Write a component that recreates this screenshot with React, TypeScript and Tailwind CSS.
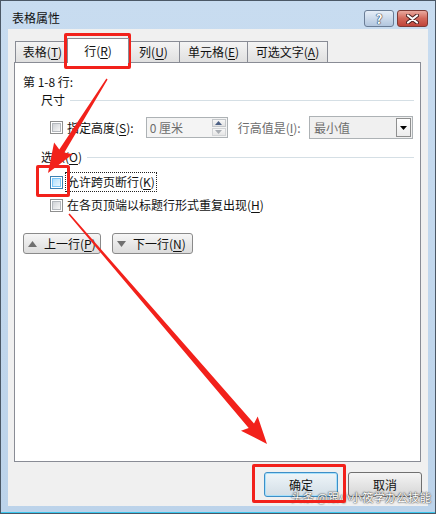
import React from "react";

type Pt = [number, number];

// tapered annotation arrow, computed as a polygon
function arrowPoints(t: Pt, h: Pt, headLen: number, headW: number, tailW: number, neckW: number) {
  const dx = h[0] - t[0];
  const dy = h[1] - t[1];
  const L = Math.hypot(dx, dy);
  const ux = dx / L, uy = dy / L, px = -uy, py = ux;
  const bx = h[0] - ux * headLen, by = h[1] - uy * headLen;
  const pts: Pt[] = [
    [t[0] + (px * tailW) / 2, t[1] + (py * tailW) / 2],
    [bx + (px * neckW) / 2, by + (py * neckW) / 2],
    [bx + (px * headW) / 2 - ux * 3, by + (py * headW) / 2 - uy * 3],
    h,
    [bx - (px * headW) / 2 - ux * 3, by - (py * headW) / 2 - uy * 3],
    [bx - (px * neckW) / 2, by - (py * neckW) / 2],
    [t[0] - (px * tailW) / 2, t[1] - (py * tailW) / 2],
  ];
  return pts.map((p) => p.map((n) => n.toFixed(1)).join(",")).join(" ");
}

function Mn({ c }: { c: string }) {
  return <span className="underline decoration-1 underline-offset-[2px]">{c}</span>;
}

function Check({ hot = false }: { hot?: boolean }) {
  return (
    <span
      className={`flex h-[13px] w-[13px] shrink-0 items-center justify-center border bg-white ${
        hot ? "border-[#3c7fb1]" : "border-[#8e8f8f]"
      }`}
    >
      <span
        className={`h-[9px] w-[9px] border ${
          hot
            ? "border-[#79c6f9] bg-linear-to-br from-[#b1dffd] to-[#e9f7fe]"
            : "border-[#b4b8bd] bg-linear-to-br from-[#cfd2d6] to-[#f7f7f7]"
        }`}
      />
    </span>
  );
}

function Tab({ children, w, active = false, last = false }: { children: React.ReactNode; w: string; active?: boolean; last?: boolean }) {
  if (active) {
    return (
      <div
        className={`relative z-10 -mx-[2px] -mb-px flex h-[25px] items-center justify-center border-x border-t border-[#898c95] bg-white ${w}`}
      >
        {children}
      </div>
    );
  }
  return (
    <div
      className={`flex h-[21px] items-center justify-center border-l border-t border-[#898c95] bg-linear-to-b from-[#f4f4f4] to-[#e0e0e0] ${
        last ? "border-r" : ""
      } ${w}`}
    >
      {children}
    </div>
  );
}

function Section({ children }: { children: React.ReactNode }) {
  return (
    <div className="flex h-[16px] items-center pl-[18px]">
      <span>{children}</span>
      <span className="ml-[5px] h-px flex-1 bg-[#d5dfe5]" />
    </div>
  );
}

function NavButton({ up, children }: { up: boolean; children: React.ReactNode }) {
  return (
    <div className="flex h-[21px] items-center gap-[7px] rounded-[3px] border border-[#8a8a8a] bg-linear-to-b from-[#f6f6f6] to-[#dcdcdc] pl-[4px]">
      <svg width="9" height="6" viewBox="0 0 9 6">
        {up ? <polygon points="0,6 9,6 4.5,0" fill="#707070" /> : <polygon points="0,0 9,0 4.5,6" fill="#707070" />}
      </svg>
      <span>{children}</span>
    </div>
  );
}

export default function App() {
  return (
    <div className="relative h-[514px] w-[437px] bg-white font-['Noto_Sans_CJK_SC',sans-serif] text-[12px] leading-[16px] text-[#111]">
      {/* window frame */}
      <div className="flex h-[514px] w-[436px] flex-col border border-[#4b5866] bg-linear-to-b from-[#c8dcf0] to-[#bcd3ea]">
        {/* title bar */}
        <div className="flex h-[28px] items-start justify-between pr-[7px]">
          <span className="pl-[11px] pt-[9px]">表格属性</span>
          <div className="flex gap-[3px] pt-[9px]">
            <div className="flex h-[17px] w-[30px] items-center justify-center rounded-[3px] border border-[#6a7d96] bg-linear-to-b from-[#e6eef8] to-[#b2c6de]">
              <span className="text-[13px] font-bold leading-[13px] text-white [text-shadow:0_0_1px_#23344b,0_0_1px_#23344b,0_0_1px_#23344b]">
                ?
              </span>
            </div>
            <div className="flex h-[17px] w-[31px] items-center justify-center rounded-[3px] border border-[#7d3a35] bg-linear-to-b from-[#e9a99f] via-[#d2675a] to-[#c0443a]">
              <svg width="13" height="10" viewBox="0 0 13 10">
                <path d="M2 1.5 L11 8.5 M11 1.5 L2 8.5" stroke="#4a2020" strokeWidth="4" strokeLinecap="round" />
                <path d="M2 1.5 L11 8.5 M11 1.5 L2 8.5" stroke="#ffffff" strokeWidth="2.2" strokeLinecap="round" />
              </svg>
            </div>
          </div>
        </div>

        {/* client area */}
        <div className="mx-[7px] h-[477px] bg-[#f0f0f0] pl-[6px] pr-[7px] pt-[9px]">
          <div className="flex h-[24px] items-end pl-[1px]">
            <Tab w="w-[54px]">
              <span>
                表格(<Mn c="T" />)
              </span>
            </Tab>
            <Tab w="w-[62px]" active>
              <span>
                行(<Mn c="R" />)
              </span>
            </Tab>
            <Tab w="w-[52px]">
              <span>
                列(<Mn c="U" />)
              </span>
            </Tab>
            <Tab w="w-[68px]">
              <span>
                单元格(<Mn c="E" />)
              </span>
            </Tab>
            <Tab w="w-[81px]" last>
              <span>
                可选文字(<Mn c="A" />)
              </span>
            </Tab>
          </div>

          <div className="h-[400px] w-[407px] border border-[#898c95] bg-white pl-[8px] pr-[6px] pt-[11px]">
            <div>第 1-8 行:</div>

            <div className="mt-[2px]">
              <Section>尺寸</Section>
            </div>

            <div className="mt-[8px] flex h-[23px] items-center pl-[27px]">
              <Check />
              <span className="ml-[4px]">
                指定高度(<Mn c="S" />):
              </span>
              <div className="ml-[12px] flex h-[21px] w-[82px] border border-[#adb2b5] bg-[#f4f4f4]">
                <span className="flex-1 pl-[3px] leading-[19px] text-[#6d6d6d]">0 厘米</span>
                <div className="flex w-[16px] flex-col gap-px p-px">
                  <span className="flex flex-1 items-center justify-center border border-[#c4c7ca] bg-linear-to-b from-[#f7f7f7] to-[#e2e2e2]">
                    <svg width="7" height="4" viewBox="0 0 7 4">
                      <polygon points="0,4 7,4 3.5,0" fill="#4d6185" />
                    </svg>
                  </span>
                  <span className="flex flex-1 items-center justify-center border border-[#d2d4d6] bg-linear-to-b from-[#f7f7f7] to-[#e6e6e6]">
                    <svg width="7" height="4" viewBox="0 0 7 4">
                      <polygon points="0,0 7,0 3.5,4" fill="#a9adb3" />
                    </svg>
                  </span>
                </div>
              </div>
              <span className="ml-[10px] text-[#6d6d6d]">
                行高值是(<Mn c="I" />):
              </span>
              <div className="ml-auto mr-px flex h-[23px] w-[104px] border border-[#adb2b5] bg-[#f0f0f0]">
                <span className="flex-1 pl-[4px] leading-[21px] text-[#6d6d6d]">最小值</span>
                <span className="m-px flex w-[15px] items-center justify-center border border-[#8e8f8f] bg-linear-to-b from-[#ffffff] to-[#ececec]">
                  <svg width="7" height="4" viewBox="0 0 7 4">
                    <polygon points="0,0 7,0 3.5,4" fill="#000" />
                  </svg>
                </span>
              </div>
            </div>

            <div className="mt-[10px]">
              <Section>
                选项(<Mn c="O" />)
              </Section>
            </div>

            <div className="mt-[7px] flex h-[20px] items-center pl-[27px]">
              <Check hot />
              <span className="ml-[2px] flex h-[20px] items-center border border-dotted border-[#222] px-px">
                允许跨页断行(<Mn c="K" />)
              </span>
            </div>
            <div className="mt-[3px] flex h-[20px] items-center pl-[27px]">
              <Check />
              <span className="ml-[4px]">
                在各页顶端以标题行形式重复出现(<Mn c="H" />)
              </span>
            </div>

            <div className="mt-[18px] flex gap-[11px]">
              <div className="w-[78px]">
                <NavButton up>
                  上一行(<Mn c="P" />)
                </NavButton>
              </div>
              <div className="w-[81px]">
                <NavButton up={false}>
                  下一行(<Mn c="N" />)
                </NavButton>
              </div>
            </div>
          </div>

          <div className="-mr-px mt-[10px] flex justify-end gap-[10px]">
            <div className="flex h-[25px] w-[74px] items-center justify-center rounded-[3px] border border-[#3c8fc8] bg-linear-to-b from-[#eef5f9] to-[#d3dee6] shadow-[inset_0_0_0_1px_#a8e0fa]">
              确定
            </div>
            <div className="flex h-[25px] w-[74px] items-center justify-center rounded-[3px] border border-[#707070] bg-linear-to-b from-[#f4f4f4] to-[#d6d6d6]">
              取消
            </div>
          </div>
        </div>

        <div className="mt-[6px] h-px bg-[#3bc7ee]" />
      </div>

      {/* watermark */}
      <span className="absolute left-[291px] top-[489px] text-[11.5px] text-white [text-shadow:0_0_1px_#333,0_0_2px_#333]">
        头条 @跟小小筱学办公技能
      </span>

      {/* red annotations */}
      <div className="absolute left-[64px] top-[33px] h-[36px] w-[67px] rounded-[2px] border-[3px] border-[#f2211b]" />
      <div className="absolute left-[36px] top-[165px] h-[32px] w-[34px] rounded-[2px] border-[3px] border-[#f2211b]" />
      <div className="absolute left-[252px] top-[464px] h-[39px] w-[94px] rounded-[2px] border-[3px] border-[#f2211b]" />
      <svg className="pointer-events-none absolute left-0 top-0" width="437" height="514" viewBox="0 0 437 514">
        <polygon points={arrowPoints([107, 79], [48, 173], 26, 22, 1.5, 6)} fill="#f2211b" />
        <polygon points={arrowPoints([69, 214], [267, 444], 24, 22, 1.5, 7)} fill="#f2211b" />
      </svg>
    </div>
  );
}
